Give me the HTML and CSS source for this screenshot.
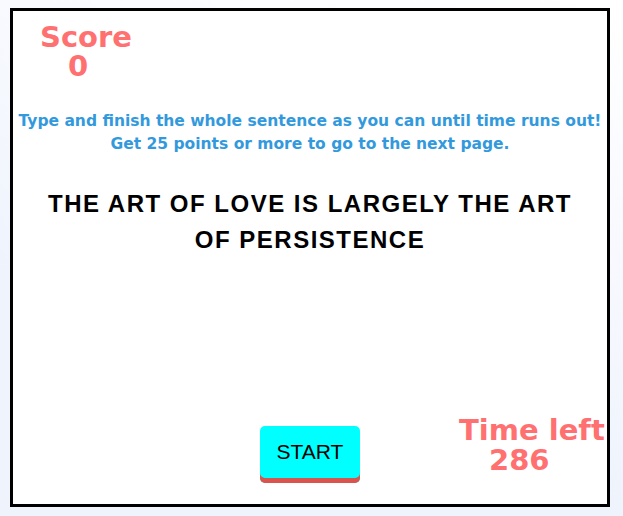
FILE: index.html
```html
<!DOCTYPE html>
<html>
<head>
<meta charset="utf-8">
<link rel="stylesheet" href="styles.css">
</head>
<body>
<div class="game">
  <div class="score">
    <div class="score-label">Score</div>
    <div class="score-value">0</div>
  </div>
  <div class="instructions">
    <p>Type and finish the whole sentence as you can until time runs out!</p>
    <p>Get 25 points or more to go to the next page.</p>
  </div>
  <div class="sentence">THE ART OF LOVE IS LARGELY THE ART OF PERSISTENCE</div>
  <div class="spacer"></div>
  <div class="bottom">
    <div></div>
    <button class="start">START</button>
    <div class="timer">
      <div class="timer-label">Time left</div>
      <div class="timer-value">286</div>
    </div>
  </div>
</div>
</body>
</html>
```

FILE: styles.css
```css
html, body {
  margin: 0;
  height: 100%;
}
body {
  background: linear-gradient(200deg, #ffffff 0%, #f7f9fe 35%, #eef3fc 70%);
  padding: 8px 0 0 10px;
  box-sizing: border-box;
  font-family: "Liberation Sans", Arial, sans-serif;
}
.game {
  width: 600px;
  height: 499px;
  box-sizing: border-box;
  border: 3px solid #000;
  background: #fff;
  display: flex;
  flex-direction: column;
}
.score {
  padding: 12px 0 0 27px;
  color: #ff7070;
  font-family: "DejaVu Sans", sans-serif;
  font-weight: bold;
  line-height: 29px;
  font-size: 29px;
}
.score-value {
  padding-left: 28px;
}
.instructions {
  margin-top: 29px;
  text-align: center;
  color: #3399dd;
  font-family: "DejaVu Sans", sans-serif;
  font-weight: bold;
  font-size: 15.5px;
}
.instructions p {
  margin: 0;
  line-height: 23px;
}
.sentence {
  margin: 30px auto 0;
  width: 540px;
  text-align: center;
  font-weight: bold;
  font-size: 24px;
  letter-spacing: 1.5px;
  line-height: 36px;
  color: #000;
}
.spacer {
  flex: 1;
}
.bottom {
  display: grid;
  grid-template-columns: 1fr auto 1fr;
  align-items: start;
  padding-bottom: 21px;
}
.start {
  margin-top: 12px;
  width: 100px;
  height: 57px;
  border: none;
  border-radius: 5px;
  background: #00ffff;
  box-shadow: inset 0 -5px 0 #d9534f;
  font-family: "Liberation Sans", Arial, sans-serif;
  font-size: 21px;
  color: #000;
  padding: 0 0 5px;
}
.timer {
  margin-top: 1px;
  color: #ff7070;
  font-family: "DejaVu Sans", sans-serif;
  font-weight: bold;
  line-height: 30px;
  font-size: 29px;
  padding-left: 99px;
  white-space: nowrap;
}
.timer-value {
  padding-left: 30px;
}
```
